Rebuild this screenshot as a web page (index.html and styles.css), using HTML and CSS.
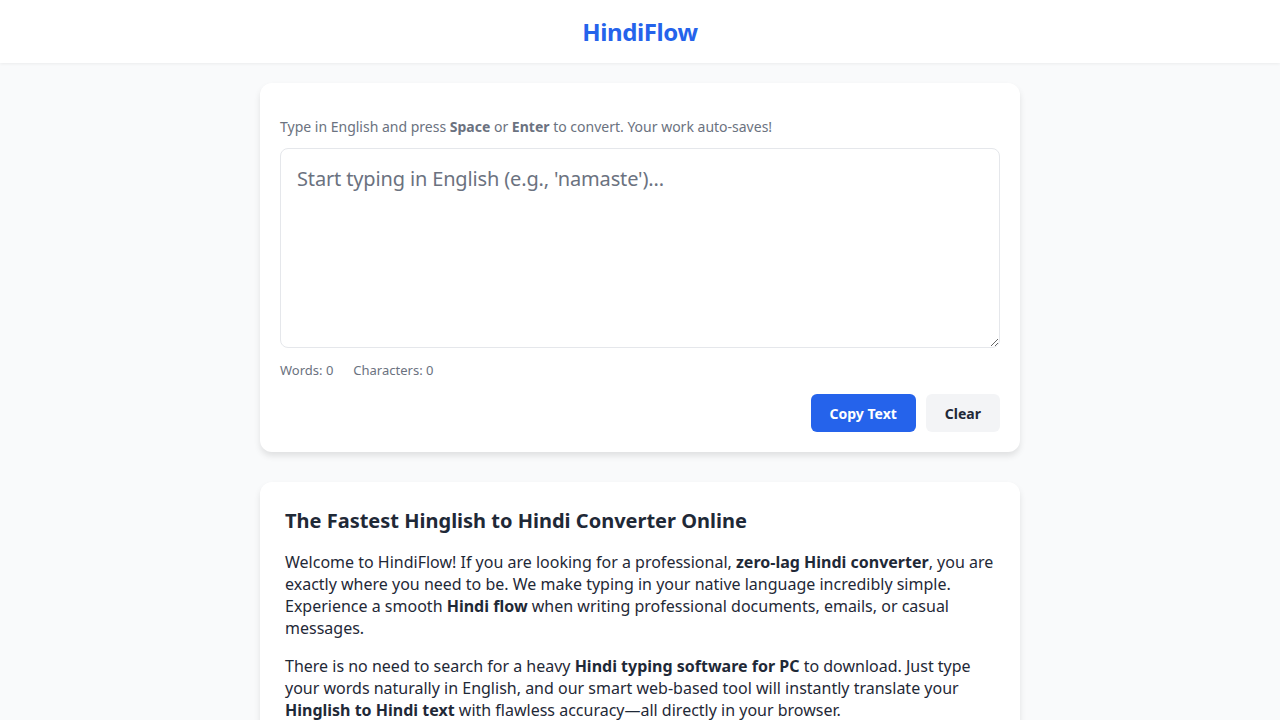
FILE: index.html
```html
<!DOCTYPE html>
<html lang="en">
<head>
    <meta charset="UTF-8">
    <meta name="viewport" content="width=device-width, initial-scale=1.0">
    <title>HindiFlow - Hinglish to Hindi Converter</title>
    <link rel="stylesheet" href="styles.css">
</head>
<body>
    <header class="site-header">
        <h1 class="logo">HindiFlow</h1>
    </header>

    <main class="container">
        <div class="card editor">
            <p class="hint">Type in English and press <strong>Space</strong> or <strong>Enter</strong> to convert. Your work auto-saves!</p>
            <textarea class="input" placeholder="Start typing in English (e.g., 'namaste')..."></textarea>
            <div class="stats">
                <span>Words: <span id="words">0</span></span>
                <span>Characters: <span id="chars">0</span></span>
            </div>
            <div class="actions">
                <button class="btn btn-primary">Copy Text</button>
                <button class="btn btn-light">Clear</button>
            </div>
        </div>

        <section class="card article">
            <h2>The Fastest Hinglish to Hindi Converter Online</h2>
            <p>Welcome to HindiFlow! If you are looking for a professional, <strong>zero-lag Hindi converter</strong>, you are exactly where you need to be. We make typing in your native language incredibly simple. Experience a smooth <strong>Hindi flow</strong> when writing professional documents, emails, or casual messages.</p>
            <p>There is no need to search for a heavy <strong>Hindi typing software for PC</strong> to download. Just type your words naturally in English, and our smart web-based tool will instantly translate your <strong>Hinglish to Hindi text</strong> with flawless accuracy—all directly in your browser.</p>
        </section>
    </main>
</body>
</html>
```

FILE: styles.css
```css
body {
    font-family: "Noto Sans", "Open Sans", sans-serif;
    margin: 0;
    background-color: #f9fafb;
    color: #1f2937;
}
.site-header {
    background-color: #fff;
    height: 63px;
    display: flex;
    align-items: center;
    justify-content: center;
    box-shadow: 0 1px 3px rgba(0,0,0,0.06);
}
.logo {
    margin: 0;
    font-size: 24px;
    font-weight: 700;
    letter-spacing: -0.4px;
    color: #2563eb;
}
.container {
    width: 760px;
    margin: 20px auto 0;
}
.card {
    background-color: #fff;
    border-radius: 12px;
    box-shadow: 0 4px 6px rgba(0,0,0,0.1);
}
.editor {
    padding: 34px 20px 20px;
    margin-bottom: 30px;
}
.hint {
    margin: 0 0 11px;
    font-size: 14px;
    line-height: 20px;
    color: #6b7280;
}
.input {
    display: block;
    box-sizing: border-box;
    width: 100%;
    height: 200px;
    padding: 16px;
    border: 1px solid #e5e7eb;
    border-radius: 8px;
    font-family: inherit;
    font-size: 20px;
    line-height: 28px;
    letter-spacing: -0.15px;
    color: #1f2937;
    resize: vertical;
    outline: none;
}
.input::placeholder {
    color: #6b7280;
}
.stats {
    display: flex;
    gap: 20px;
    margin-top: 12px;
    font-size: 13px;
    line-height: 20px;
    color: #6b7280;
}
.actions {
    display: flex;
    justify-content: flex-end;
    gap: 10px;
    margin-top: 14px;
}
.btn {
    height: 38px;
    padding: 0 19px;
    border: none;
    border-radius: 6px;
    font-family: inherit;
    font-size: 14px;
    font-weight: 700;
    cursor: pointer;
}
.btn-primary {
    background-color: #2563eb;
    color: #fff;
}
.btn-light {
    background-color: #f3f4f6;
    color: #1f2937;
}
.article {
    padding: 25px;
}
.article h2 {
    margin: 0 0 16px;
    font-size: 20px;
    line-height: 28px;
    font-weight: 700;
}
.article p {
    margin: 0 0 16px;
    font-size: 16px;
    line-height: 22px;
}
```
